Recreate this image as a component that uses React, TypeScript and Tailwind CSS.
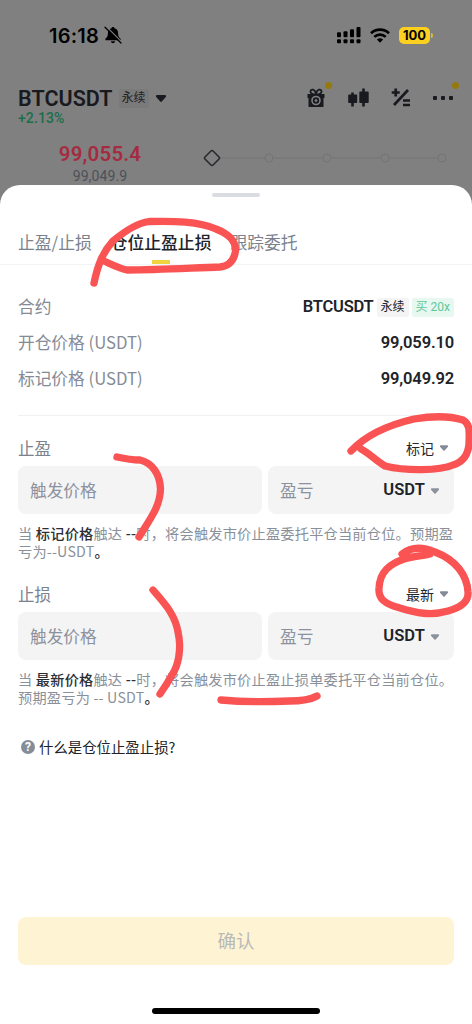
import { clsx } from "clsx";

const din = "font-[Roboto,'Noto_Sans_CJK_SC',sans-serif]";

const tabs = ["止盈/止损", "仓位止盈止损", "跟踪委托"];

const prices = [
  { label: "开仓价格 (USDT)", value: "99,059.10" },
  { label: "标记价格 (USDT)", value: "99,049.92" },
];

function Caret({ className }: { className?: string }) {
  return (
    <svg viewBox="0 0 10 7" className={clsx("shrink-0", className)} fill="currentColor">
      <path d="M1 0h8q1 0 1 1v.8L5.8 6.5q-.8.8-1.6 0L0 1.8V1q0-1 1-1Z" />
    </svg>
  );
}

function StatusBar() {
  return (
    <div className="flex h-[70px] items-center pl-[49px] pr-[39px] text-black">
      <span className="mt-px font-[Inter,sans-serif] text-[20px] font-semibold leading-none tracking-[0.2px]">16:18</span>
      <svg viewBox="0 0 18 18" className="ml-[5px] h-[18px] w-[18px]">
        <path
          d="M9 1c-1 0-1.500.6-1.500 1.300C5 3 3.900 4.800 3.900 7.200c0 3.200-1 4.200-2.500 5.600v1.400h15.200v-1.400c-1.500-1.400-2.500-2.400-2.500-5.600 0-2.400-1.100-4.200-3.600-4.900C10.500 1.600 10 1 9 1Z"
          fill="#000"
        />
        <path d="M6.800 15.200h4.400q-.5 2-2.200 2t-2.200-2Z" fill="#000" />
        <path d="M2.200 0.500l15.800 15.800" stroke="#808080" strokeWidth="1.200" />
        <path d="M1 1.300l16 15.700" stroke="#000" strokeWidth="1.300" strokeLinecap="round" />
      </svg>
      <div className="ml-auto flex items-center">
        <svg viewBox="0 0 24 17" className="mr-px h-[17px] w-6" fill="#000">
          <rect x="0" y="5.300" width="4" height="5" rx="1" />
          <rect x="6.500" y="4.300" width="4" height="6" rx="1" />
          <rect x="13" y="2.300" width="4" height="8" rx="1" />
          <rect x="19.500" y="0" width="4" height="10.300" rx="1" />
          <rect x="0" y="12.300" width="4" height="4" rx="1" />
          <rect x="6.500" y="12.300" width="4" height="4" rx="1" />
          <rect x="13" y="12.300" width="4" height="4" rx="1" />
          <rect x="19.500" y="12.300" width="4" height="4" rx="1" />
        </svg>
        <svg viewBox="0 0 20 15" className="ml-[8px] h-[15px] w-5" fill="none" stroke="#000" strokeWidth="2.700">
          <path d="M1 5.200a12.900 12.900 0 0 1 18 0" />
          <path d="M4.300 8.900a8.200 8.200 0 0 1 11.400 0" />
          <path d="M10 14.800 6.900 11.600a4.500 4.500 0 0 1 6.200 0Z" fill="#000" stroke="none" />
        </svg>
        <div className="ml-[9px] flex h-[17px] w-[31px] items-center justify-center rounded-[5px] bg-[#fbd020] font-[Inter,sans-serif] text-[13px] font-bold leading-none">
          100
        </div>
        <div className="ml-px h-[5px] w-[2px] rounded-r-full bg-[#d8bd3a]" />
      </div>
    </div>
  );
}

function ToolIcons() {
  return (
    <div className="flex items-center text-[#181a1f]">
      <div className="relative">
        <svg viewBox="0 0 18 20" className="h-5 w-[18px]">
          <path d="M9 6.500C5 6.500 3 5 3.500 3 4.200 0.800 7.800 1 9 5.500 10.200 1 13.800.8 14.500 3 15 5 13 6.500 9 6.500Z" fill="none" stroke="currentColor" strokeWidth="1.800" />
          <path d="M0.500 6h17v4H16.500v9H1.500v-9H.5Z" fill="currentColor" />
          <circle cx="9" cy="12.500" r="4" fill="none" stroke="#808080" strokeWidth="1.600" />
          <path d="m9 10.800 1.700 1.700L9 14.200l-1.700-1.700Z" fill="#808080" />
        </svg>
        <span className="absolute -right-[7px] -top-[6px] h-[7px] w-[7px] rounded-full bg-[#96790c]" />
      </div>
      <svg viewBox="0 0 21 20" className="ml-[23px] h-5 w-[21px]" fill="currentColor">
        <path d="M3.200 4.500h2.600v2H8.500q.7 0 .7.700v7q0 .7-.7.700H5.800V18.500H3.200V15H.9q-.7 0-.7-.7v-7q0-.7.700-.7h2.300Z" />
        <path d="M14.200 0.500h2.600v3H20q.7 0 .7.700v10q0 .7-.7.700H16.800v3.600H14.200v-3.600H12q-.7 0-.7-.7v-10q0-.7.700-.7h2.200Z" />
      </svg>
      <svg viewBox="0 0 20 20" className="ml-[22px] h-5 w-5" fill="none" stroke="currentColor" strokeWidth="2.700">
        <path d="M4.700 0.500v8M.7 4.500h8" />
        <path d="M17 2 3 17" />
        <path d="M12 12.500h7M12 17h7" />
      </svg>
      <div className="relative ml-[22px] flex gap-[3px]">
        <span className="h-1 w-1 rounded-[1px] bg-current" />
        <span className="ml-px h-1 w-1 rounded-[1px] bg-current" />
        <span className="ml-px h-1 w-1 rounded-[1px] bg-current" />
        <span className="absolute -right-[6px] -top-[14px] h-[7px] w-[7px] rounded-full bg-[#96790c]" />
      </div>
    </div>
  );
}

function MarketHeader() {
  return (
    <div className={clsx("h-[115px]", din)}>
      <div className="mt-[16px] flex h-6 items-center pl-[18px] pr-[19px]">
        <span className="mt-px text-[21.500px] font-semibold leading-none tracking-[0.05px] text-[#181a1f]">BTCUSDT</span>
        <span className="ml-[6px] rounded-[2px] bg-[#7a7a7a] px-[3px] py-[3px] text-[12px] leading-[13px] text-[#1f2126]">永续</span>
        <Caret className="ml-[7px] h-[7px] w-[10px] text-[#181a1f]" />
        <div className="ml-auto">
          <ToolIcons />
        </div>
      </div>
      <div className="h-4 pl-[18px] text-[14px] font-medium leading-4 tracking-[0.100px] text-[#1c6e4c]">+2.13%</div>
      <div className="mt-[15px] flex">
        <div className="w-[200px] text-center">
          <div className="h-[27px] text-[20.500px] font-semibold leading-[27px] tracking-[0.2px] text-[#a42c40]">99,055.4</div>
          <div className="h-4 text-[14px] leading-[17px] tracking-[0.100px] text-[#4d5157]">99,049.9</div>
        </div>
        <svg viewBox="0 0 260 24" className="mt-[2px] h-6 w-[260px]" fill="#808080">
          <path d="M20 15h222" stroke="#747474" />
          {[69, 127, 185, 242].map((x) => (
            <circle key={x} cx={x} cy="15" r="4" stroke="#747474" />
          ))}
          <rect x="6.300" y="9.300" width="11.400" height="11.400" rx="1.500" transform="rotate(45 12 15)" stroke="#25272c" strokeWidth="1.500" />
        </svg>
      </div>
    </div>
  );
}

interface OrderSectionProps {
  title: string;
  trigger: string;
  lines: React.ReactNode[];
}

function OrderSection({ title, trigger, lines }: OrderSectionProps) {
  return (
    <section className="h-[146px]">
      <div className="flex h-9 items-center justify-between pr-[6px]">
        <span className="text-[16.500px] text-[#7b828e]">{title}</span>
        <span className="flex items-center gap-[6px] text-[14px] text-[#24272d]">
          {trigger}
          <Caret className="h-[6px] w-2 text-[#858b96]" />
        </span>
      </div>
      <div className="flex gap-[6px] text-[16.700px] text-[#8b919e]">
        <div className="flex h-12 w-[244px] items-center rounded-lg bg-[#f4f4f4] pl-3 pt-px">触发价格</div>
        <div className="flex h-12 flex-1 items-center rounded-lg bg-[#f4f4f4] pl-3 pr-[15px] pt-px">
          盈亏
          <span className={clsx("ml-auto text-[16.500px] font-semibold tracking-[0.100px] text-[#202329]", din)}>USDT</span>
          <Caret className="ml-[6px] h-[6px] w-2" />
        </div>
      </div>
      <div className="mt-[10px] whitespace-nowrap text-[14.200px] leading-[18px] tracking-[0.22px] text-[#8a909a]">
        {lines.map((line, i) => (
          <p key={i}>{line}</p>
        ))}
      </div>
    </section>
  );
}

function Strong({ children }: { children: React.ReactNode }) {
  return <span className="font-medium text-[#2b2e34]">{children}</span>;
}

// Freehand marker strokes drawn over the whole screen
function MarkerStrokes() {
  return (
    <svg
      viewBox="0 0 472 1024"
      className="pointer-events-none absolute inset-0 h-[1024px] w-[472px]"
      fill="none"
      stroke="#fa5354"
      strokeWidth="7.300"
      strokeLinecap="round"
      strokeLinejoin="round"
    >
      <path d="M94 283C98 264 103 252 113 241C125 231 137 223 149 221.500C173 221 199 221 216 229C231 235 236 242 235.500 251C234 261 229 266 220 267C190 268 158 270 127 270C118 268 111 264 104 261" />
      <path d="M117 457C126 459 132 460 140 460C153 463 160 475 160.500 489C160 507 150 519 139 537" />
      <path d="M351 451C366 435 388 425 414 419C432 416 450 416 463 420C471 424 469 434 469 444C468 455 463 462 453 465C440 471 405 471 385 466C375 460 369 453 361 449" />
      <path d="M153 590C164 603 175 614 178 632C182 650 178 666 172 675C168 682 165 687 160 694" />
      <path d="M402 554C412 546 423 547 435 552C456 560 467 575 468 592C469 603 459 608 448 611C431 616 416 613 400 608C385 604 378 599 379 588C380 571 390 564 404 559C413 556 422 556 430 554" />
      <path d="M221 700C242 702 268 702 289 701C300 701 310 700 317 696" />
    </svg>
  );
}

export default function App() {
  return (
    <div className="relative flex h-[1024px] w-[472px] flex-col overflow-hidden bg-[#808080] font-['Noto_Sans_CJK_SC',sans-serif]">
      <StatusBar />
      <MarketHeader />
      <main className="flex flex-1 flex-col rounded-t-[20px] bg-white">
        <div className="mx-auto mt-[8px] h-1 w-12 rounded-full bg-[#d9dce1]" />
        <nav className="mt-[26px] flex h-[42px] gap-[19px] border-b border-[#f3f4f5] pl-[18px] text-[16.800px] leading-[38px] text-[#7b828e]">
          {tabs.map((tab, i) => (
            <div key={tab} className={clsx("relative", i === 1 && "font-medium text-[#202329]")}>
              {tab}
              {i === 1 && <span className="absolute bottom-0 left-[41px] h-1 w-[18px] bg-[#f0d43f]" />}
            </div>
          ))}
        </nav>

        <div className="px-[18px]">
          <div className="mt-[24px] flex h-9 items-center justify-between">
            <span className="text-[16.700px] text-[#858b96]">合约</span>
            <div className={clsx("flex items-center", din)}>
              <span className="text-[16.500px] font-semibold tracking-[-0.2px] text-[#202329]">BTCUSDT</span>
              <span className="ml-[3px] rounded-[2px] bg-[#f4f4f4] px-1 text-[12px] leading-[19px] text-[#202329]">永续</span>
              <span className="ml-[3px] rounded-[2px] bg-[#e6f8f0] px-1 text-[12px] leading-[19px] text-[#5fc798]">买 20x</span>
            </div>
          </div>
          {prices.map((row) => (
            <div key={row.label} className="flex h-9 items-center justify-between">
              <span className="text-[16.700px] text-[#858b96]">{row.label}</span>
              <span className={clsx("text-[16.500px] font-semibold tracking-[-0.15px] text-[#202329]", din)}>{row.value}</span>
            </div>
          ))}
          <hr className="mb-[14px] mt-[18px] border-[#f0f1f2]" />

          <OrderSection
            title="止盈"
            trigger="标记"
            lines={[
              <>当 <Strong>标记价格</Strong>触达 <Strong>--</Strong>时，将会触发市价止盈委托平仓当前仓位。预期盈</>,
              <>亏为--USDT<Strong>。</Strong></>,
            ]}
          />
          <OrderSection
            title="止损"
            trigger="最新"
            lines={[
              <>当 <Strong>最新价格</Strong>触达 <Strong>--</Strong>时，将会触发市价止盈止损单委托平仓当前仓位。</>,
              <>预期盈亏为 -- USDT<Strong>。</Strong></>,
            ]}
          />

          <div className="mt-[15px] flex h-5 items-center text-[14.400px] text-[#202329]">
            <span className="ml-[3px] mr-[4px] flex h-[14px] w-[14px] items-center justify-center rounded-full bg-[#858d99] font-[Roboto,sans-serif] text-[12px] font-bold leading-none text-white">
              ?
            </span>
            什么是仓位止盈止损?
          </div>
        </div>

        <button className="mx-[18px] mt-auto h-12 rounded-lg bg-[#fef4d3] text-[18.500px] text-[#b9b9b9]">确认</button>
        <div className="mx-auto mb-[10px] mt-[43px] h-[6px] w-[168px] rounded-full bg-black" />
      </main>
      <MarkerStrokes />
    </div>
  );
}
